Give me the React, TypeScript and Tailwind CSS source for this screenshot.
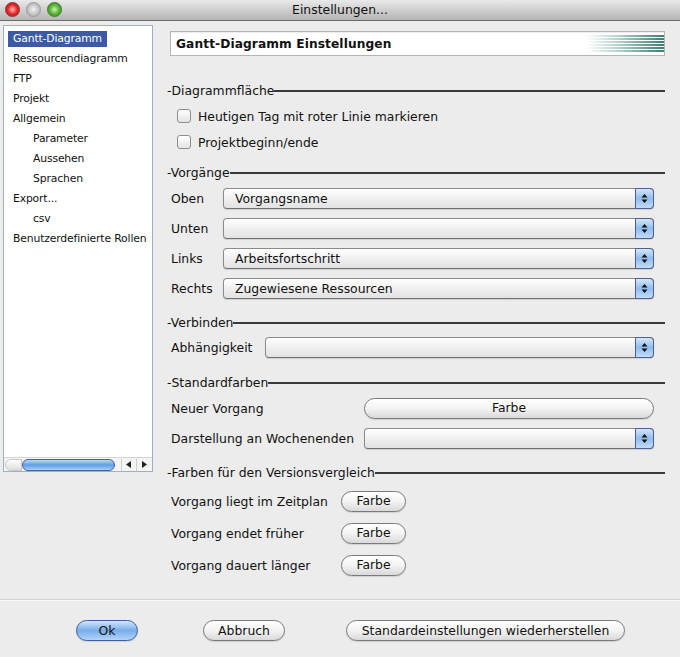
import type { ReactNode } from 'react';

const treeItems = [
  { label: 'Gantt-Diagramm', indent: false, selected: true },
  { label: 'Ressourcendiagramm', indent: false },
  { label: 'FTP', indent: false },
  { label: 'Projekt', indent: false },
  { label: 'Allgemein', indent: false },
  { label: 'Parameter', indent: true },
  { label: 'Aussehen', indent: true },
  { label: 'Sprachen', indent: true },
  { label: 'Export...', indent: false },
  { label: 'csv', indent: true },
  { label: 'Benutzerdefinierte Rollen', indent: false },
];

function Arrows() {
  return (
    <svg width="7" height="11" viewBox="0 0 7 11">
      <polygon points="3.5,1 6.5,4.5 0.5,4.5" fill="#111" />
      <polygon points="0.5,6.5 6.5,6.5 3.5,10" fill="#111" />
    </svg>
  );
}

function Combo({ value }: { value?: string }) {
  return (
    <div className="flex h-[21px] flex-1 items-stretch rounded-[4px] border border-[#8a8a8a] border-b-[#6f6f6f] bg-linear-to-b from-white via-[#f0f0f0] to-[#e2e2e2] shadow-[0_1px_1px_rgba(0,0,0,0.12)]">
      <span className="flex-1 pl-[11px] leading-[20px]">{value}</span>
      <span className="-my-px -mr-px flex w-[19px] items-center justify-center rounded-r-[4px] border border-[#4e5f93] bg-linear-to-b from-[#d6e7fa] via-[#8fbcee] to-[#c2dcf7]">
        <Arrows />
      </span>
    </div>
  );
}

function Pill({ children, className = '', blue = false }: { children: ReactNode; className?: string; blue?: boolean }) {
  return (
    <div
      className={`flex h-[21px] items-center justify-center rounded-full border pt-px shadow-[0_1px_1px_rgba(0,0,0,0.12)] ${
        blue
          ? 'border-[#3b5e9c] bg-linear-to-b from-[#d3e6fb] via-[#78acea] to-[#b3d5f7]'
          : 'border-[#7a7a7a] bg-linear-to-b from-white via-[#f3f3f3] to-[#d9d9d9]'
      } ${className}`}
    >
      {children}
    </div>
  );
}

function SectionTitle({ title, className = '' }: { title: string; className?: string }) {
  return (
    <div className={`flex h-[16px] items-center ${className}`}>
      <span className="pt-[2px] leading-[16px]">{title}</span>
      <div className="mt-[2px] h-[2px] flex-1 bg-[#3a3a3a]" />
    </div>
  );
}

function Checkbox({ label }: { label: string }) {
  return (
    <div className="flex h-[26px] items-center gap-[7px] pl-[10px]">
      <span className="h-[14px] w-[14px] rounded-[3px] border border-[#8e8e8e] bg-linear-to-b from-white to-[#e4e4e4]" />
      <span className="pt-[2px]">{label}</span>
    </div>
  );
}

export default function App() {
  return (
    <div className="flex h-[657px] w-[680px] flex-col bg-[#ececec] font-['DejaVu_Sans',sans-serif] text-[#111]">
      {/* title bar */}
      <div className="relative flex h-[21px] items-center justify-center border-b border-[#6b6b6b] bg-linear-to-b from-[#e9e9e9] to-[#b5b5b5] text-[12.4px]">
        <div className="absolute left-[5px] top-[2px] flex gap-[6px]">
          <span className="h-[15px] w-[15px] rounded-full border border-[#9a2a2a] bg-radial from-[#ffb0b0] via-[#e0262a] to-[#a31a1a]" />
          <span className="h-[15px] w-[15px] rounded-full border border-[#9a9a9a] bg-radial from-[#f4f4f4] via-[#c8c8c8] to-[#a5a5a5]" />
          <span className="h-[15px] w-[15px] rounded-full border border-[#3f7a24] bg-radial from-[#c8f5a8] via-[#58b43a] to-[#2f7f1c]" />
        </div>
        <span>Einstellungen...</span>
      </div>

      <div className="flex h-[578px]">
        {/* tree */}
        <div className="ml-[3px] mt-[4px] flex h-[447px] w-[150px] flex-col border border-[#9eb0c6] bg-white text-[10.8px] tracking-[-0.15px]">
          <div className="flex-1 pt-[3px]">
            {treeItems.map((item) => (
              <div
                key={item.label}
                className={`flex h-[20px] items-center whitespace-nowrap ${item.indent ? 'pl-[24px]' : 'pl-[4px]'}`}
              >
                <span
                  className={`flex h-[16px] items-center px-[5px] ${item.selected ? 'bg-[#3c5aa6] text-white' : ''}`}
                >
                  {item.label}
                </span>
              </div>
            ))}
          </div>
          <div className="flex h-[14px] items-center border-t border-[#d4d4d4] bg-[#f4f4f4] pl-[1px]">
            <span className="h-[12px] w-[17px] rounded-l-full border border-[#c8c8c8] bg-linear-to-b from-white to-[#dcdcdc]" />
            <span className="h-[12px] w-[95px] rounded-full border border-[#3e63a8] bg-linear-to-b from-[#bcd9f7] via-[#5f9de6] to-[#a9cff5]" />
            <span className="ml-[6px] flex h-[12px] w-[16px] items-center justify-center border-l border-[#cfcfcf]">
              <svg width="5" height="7" viewBox="0 0 5 7">
                <polygon points="0,3.5 5,0 5,7" fill="#222" />
              </svg>
            </span>
            <span className="flex h-[12px] w-[16px] items-center justify-center border-l border-[#cfcfcf]">
              <svg width="5" height="7" viewBox="0 0 5 7">
                <polygon points="5,3.5 0,0 0,7" fill="#222" />
              </svg>
            </span>
          </div>
        </div>

        {/* settings */}
        <div className="ml-[14px] w-[498px] text-[12.4px]">
          <div className="ml-[3px] mt-[10px] flex h-[25px] w-[495px] items-stretch border border-[#b4b4b4] bg-white shadow-[inset_0_1px_1px_rgba(0,0,0,0.08)]">
            <span className="flex flex-1 items-center pl-[5px] pt-px text-[12.2px] font-bold tracking-[0.1px]">
              Gantt-Diagramm Einstellungen
            </span>
            <div className="flex w-[78px] flex-col justify-center gap-px">
              {[0, 1, 2, 3, 4, 5].map((i) => (
                <div key={i} className="h-[2px] bg-linear-to-r from-white via-[#b7d3cf] via-40% to-[#3d7c77]" />
              ))}
            </div>
          </div>

          <SectionTitle title="-Diagrammfläche" className="mt-[26px]" />
          <div className="mt-[5px]">
            <Checkbox label="Heutigen Tag mit roter Linie markieren" />
            <Checkbox label="Projektbeginn/ende" />
          </div>

          <SectionTitle title="-Vorgänge" className="mt-[9px]" />
          <div className="mt-[3px] pl-[4px] pr-[11px]">
            {[
              ['Oben', 'Vorgangsname'],
              ['Unten', ''],
              ['Links', 'Arbeitsfortschritt'],
              ['Rechts', 'Zugewiesene Ressourcen'],
            ].map(([label, value]) => (
              <div key={label} className="flex h-[30px] items-center">
                <span className="w-[52px] pt-[2px]">{label}</span>
                <Combo value={value} />
              </div>
            ))}
          </div>

          <SectionTitle title="-Verbinden" className="mt-[11px]" />
          <div className="mt-[2px] flex h-[30px] items-center pl-[4px] pr-[11px]">
            <span className="w-[94px] pt-[2px]">Abhängigkeit</span>
            <Combo />
          </div>

          <SectionTitle title="-Standardfarben" className="mt-[12px]" />
          <div className="mt-[3px] pl-[4px] pr-[11px]">
            <div className="flex h-[30px] items-center">
              <span className="w-[193px] pt-[2px]">Neuer Vorgang</span>
              <Pill className="flex-1">Farbe</Pill>
            </div>
            <div className="flex h-[30px] items-center">
              <span className="w-[193px] pt-[2px]">Darstellung an Wochenenden</span>
              <Combo />
            </div>
          </div>

          <SectionTitle title="-Farben für den Versionsvergleich" className="mt-[11px]" />
          <div className="mt-[5px] pl-[4px]">
            {['Vorgang liegt im Zeitplan', 'Vorgang endet früher', 'Vorgang dauert länger'].map((label) => (
              <div key={label} className="flex h-[32px] items-center">
                <span className="w-[170px] pt-[3px]">{label}</span>
                <Pill className="w-[65px]">Farbe</Pill>
              </div>
            ))}
          </div>
        </div>
      </div>

      {/* footer */}
      <div className="h-px bg-[#d2d2d2]" />
      <div className="h-px bg-[#f8f8f8]" />
      <div className="flex pt-[19px] text-[12.4px]">
        <Pill blue className="ml-[76px] w-[62px]">Ok</Pill>
        <Pill className="ml-[65px] w-[82px]">Abbruch</Pill>
        <Pill className="ml-[61px] w-[279px]">Standardeinstellungen wiederherstellen</Pill>
      </div>
    </div>
  );
}
